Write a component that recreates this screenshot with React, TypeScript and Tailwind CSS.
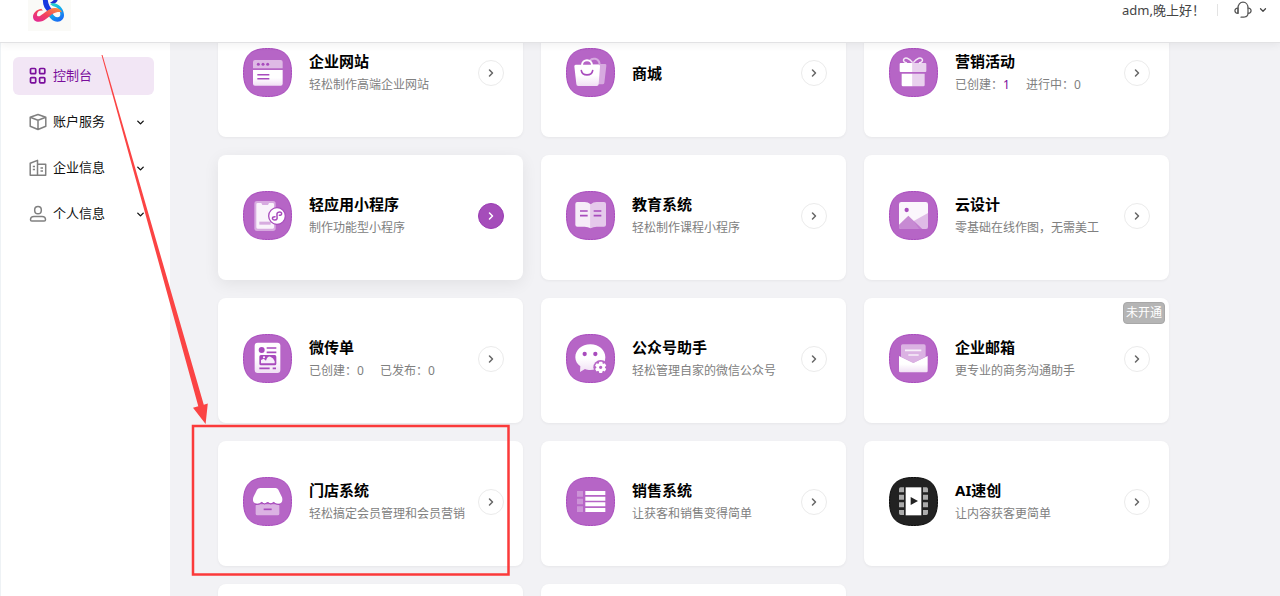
import type { ReactNode } from 'react';
import clsx from 'clsx';
import { ChevronDown, ChevronRight } from 'lucide-react';

type Stat = { label: string; value: number; active?: boolean };

type AppCard = {
  id: string;
  title: string;
  desc?: string;
  stats?: Stat[];
  icon: ReactNode;
  dark?: boolean;
  hovered?: boolean;
  badge?: string;
};

type MenuItem = { label: string; icon: ReactNode; active?: boolean };

const P = '#b665c6';

function AppIcon({ dark, children }: { dark?: boolean; children: ReactNode }) {
  return (
    <svg viewBox="0 0 147 147" className="size-[49px] shrink-0" aria-hidden="true">
      <path
        d="M73.500 1.500C124 1.500 145.500 23 145.500 73.500S124 145.500 73.500 145.500 1.500 124 1.500 73.500 23 1.500 73.500 1.500Z"
        fill={dark ? '#222222' : P}
        stroke={dark ? '#0c0c0c' : '#a84bbd'}
        strokeWidth="3"
      />
      {children}
    </svg>
  );
}

const siteIcon = (
  <>
    <path d="M30 61V42q0-6 6-6h77q6 0 6 6v19z" fill="#fff" opacity=".55" />
    <circle cx="46" cy="49" r="4.500" fill="#a84bbd" />
    <circle cx="60" cy="49" r="4.500" fill="#a84bbd" />
    <circle cx="74" cy="49" r="4.500" fill="#a84bbd" />
    <path d="M30 66h89v41q0 6-6 6H36q-6 0-6-6z" fill="url(#fade)" />
    <path d="M43 80h36M43 92h36" stroke="#a84bbd" strokeWidth="4.500" />
  </>
);

const mallIcon = (
  <>
    <path d="M76 48h42q4 0 3 5l-6 52q-1 4-5 4H80z" fill="#fff" opacity=".45" />
    <path d="M72 38c6-9 26-9 29 10" fill="none" stroke="#fff" strokeWidth="6" opacity=".45" />
    <path d="M29 50h69q5 0 4 5l-4 53q0 6-6 6H37q-6 0-6-6l-6-53q0-5 4-5z" fill="url(#fade)" />
    <path d="M48 52c0-20 30-20 30 0" fill="none" stroke="#fff" strokeWidth="6" />
    <path d="M46 68c3 17 31 17 34 0" fill="none" stroke="#a84bbd" strokeWidth="5" strokeLinecap="round" />
  </>
);

const giftIcon = (
  <>
    <path d="M71 45H35q-3 0-3 3v21q0 3 3 3h36zM71 77H38v34q0 4 4 4h29z" fill="#fff" />
    <path d="M71 45h38q3 0 3 3v21q0 3-3 3H71zM71 77h36v34q0 4-4 4H71z" fill="#fff" opacity=".7" />
    <path d="M71 44C60 29 48 27 44 34q-3 7 10 11M73 44c11-15 23-17 27-10q3 7-10 11" fill="none" stroke="#fff" strokeWidth="4.500" opacity=".85" />
  </>
);

const miniAppIcon = (
  <>
    <rect x="34" y="30" width="64" height="90" rx="8" fill="#fff" opacity=".45" />
    <path d="M40 40q0-4 4-4h11l3 6h17l3-6h11q4 0 4 4v69q0 4-4 4H44q-4 0-4-4z" fill="#fff" opacity=".85" />
    <rect x="49" y="92" width="34" height="9" fill={P} opacity=".5" />
    <circle cx="102" cy="75" r="25" fill="#fff" stroke="#a84bbd" strokeWidth="4" />
    <path d="M96 77c-10 0-10 10-1 10 10 0 7-8 7-12s-2-12 8-12c8 0 8 10-1 10" fill="none" stroke="#a84bbd" strokeWidth="4.500" strokeLinecap="round" />
  </>
);

const bookIcon = (
  <>
    <path d="M74 40Q66 33 56 33H34q-6 0-6 6v62q0 6 6 6h22q10 0 18 5z" fill="#fff" opacity=".88" />
    <path d="M74 40q8-7 18-7h22q6 0 6 6v62q0 6-6 6H92q-10 0-18 5z" fill="#fff" opacity=".65" />
    <path d="M42 60h23M42 74h23M83 60h23M83 74h23" stroke="#a84bbd" strokeWidth="5" />
  </>
);

const imageIcon = (
  <>
    <rect x="30" y="33" width="87" height="81" rx="7" fill="#fff" opacity=".94" />
    <circle cx="53" cy="57" r="6.500" fill="#a84bbd" />
    <path d="M74 90l43-24v42q0 6-6 6H90z" fill={P} opacity=".4" />
    <path d="M30 101l28-27 42 40H36q-6 0-6-6z" fill={P} opacity=".75" />
  </>
);

const flyerIcon = (
  <>
    <rect x="35" y="26" width="77" height="91" rx="9" fill="url(#fade)" />
    <circle cx="56" cy="48" r="9" fill="#a84bbd" />
    <path d="M71 42h29M71 55h29M49 103h31M89 103h10" stroke="#a84bbd" strokeWidth="5" />
    <rect x="49" y="63" width="51" height="31" rx="5" fill="#a84bbd" />
    <path d="M54 88V78l8-4 7 6q4-14 13-12 10 4 13 14v6z" fill="#f7effa" />
    <circle cx="63" cy="70" r="3" fill="#fff" />
  </>
);

const gearTeeth = [0, 60, 120, 180, 240, 300];

const wechatIcon = (
  <>
    <path d="M73 31c26 0 45 17 45 39s-19 38-45 38c-6 0-12-1-16-3l-15 9 1-17C34 91 28 82 28 70c0-22 19-39 45-39z" fill="url(#fade)" />
    <circle cx="56" cy="60" r="6.500" fill="#a84bbd" />
    <circle cx="88" cy="60" r="6.500" fill="#a84bbd" />
    <circle cx="104" cy="100" r="22" fill={P} />
    <circle cx="104" cy="100" r="9" fill="none" stroke="#fff" strokeWidth="8" />
    {gearTeeth.map((deg) => (
      <rect key={deg} x="99" y="83" width="10" height="8" rx="2" fill="#fff" transform={`rotate(${deg} 104 100)`} />
    ))}
  </>
);

const mailIcon = (
  <>
    <path d="M36 68V36q0-5 5-5h64q5 0 5 5v32L73 87z" fill="#fff" opacity=".5" />
    <path d="M48 49h49M58 63h31" stroke="#fff" strokeWidth="5" opacity=".8" />
    <path d="M30 66l43 21 43-21v45q0 4-4 4H34q-4 0-4-4z" fill="url(#fade)" />
  </>
);

const storeIcon = (
  <>
    <path d="M38 82h71v28q0 5-5 5H43q-5 0-5-5z" fill="#fff" opacity=".5" />
    <path d="M50 33h48q5 0 8 5l11 23q5 19-13 19-8 0-12-6-7 9-18 1-10 9-18-1-5 6-12 6-18 0-13-19l11-23q3-5 10-5z" fill="#fff" />
    <path d="M36 83q15 0 20-6 8 8 18 0 10 8 18 0 6 6 19 6" fill="none" stroke="#a84bbd" strokeWidth="3" />
    <path d="M62 97h24" stroke="#a84bbd" strokeWidth="5" />
  </>
);

const salesIcon = (
  <>
    <path d="M33 42h18v17H33zM33 65h18v17H33zM33 88h18v17H33z" fill="#fff" opacity=".3" />
    <path d="M58 42h60v12H58zM58 59h60v12H58zM58 76h60v12H58zM58 93h60v12H58z" fill="#fff" />
  </>
);

const videoIcon = (
  <>
    <rect x="50" y="31" width="47" height="84" fill="#fff" />
    <path d="M65 60v24l22-12z" fill="#222" />
    <path
      d="M30 36q0-5 5-5h10v15H30zM30 53h15v15H30zM30 76h15v15H30zM30 99h15v15H35q-5 0-5-5zM102 31h10q5 0 5 5v10h-15zM102 53h15v15h-15zM102 76h15v15h-15zM102 99h15v10q0 5-5 5h-10z"
      fill="#ababab"
    />
  </>
);

const cards: AppCard[] = [
  { id: 'site', title: '企业网站', desc: '轻松制作高端企业网站', icon: siteIcon },
  { id: 'mall', title: '商城', icon: mallIcon },
  {
    id: 'marketing',
    title: '营销活动',
    stats: [
      { label: '已创建', value: 1, active: true },
      { label: '进行中', value: 0 },
    ],
    icon: giftIcon,
  },
  { id: 'miniapp', title: '轻应用小程序', desc: '制作功能型小程序', icon: miniAppIcon, hovered: true },
  { id: 'edu', title: '教育系统', desc: '轻松制作课程小程序', icon: bookIcon },
  { id: 'design', title: '云设计', desc: '零基础在线作图，无需美工', icon: imageIcon },
  {
    id: 'flyer',
    title: '微传单',
    stats: [
      { label: '已创建', value: 0 },
      { label: '已发布', value: 0 },
    ],
    icon: flyerIcon,
  },
  { id: 'wechat', title: '公众号助手', desc: '轻松管理自家的微信公众号', icon: wechatIcon },
  { id: 'mail', title: '企业邮箱', desc: '更专业的商务沟通助手', icon: mailIcon, badge: '未开通' },
  { id: 'store', title: '门店系统', desc: '轻松搞定会员管理和会员营销', icon: storeIcon },
  { id: 'sales', title: '销售系统', desc: '让获客和销售变得简单', icon: salesIcon },
  { id: 'video', title: 'AI速创', desc: '让内容获客更简单', icon: videoIcon, dark: true },
];

const menu: MenuItem[] = [
  {
    label: '控制台',
    active: true,
    icon: (
      <g strokeWidth="1.700">
        <rect x="1.500" y="1.500" width="5.200" height="5.200" rx="1" />
        <rect x="10.600" y="1.500" width="5.200" height="5.200" rx="1" />
        <rect x="1.500" y="10.600" width="5.200" height="5.200" rx="1" />
        <rect x="10.600" y="10.600" width="5.200" height="5.200" rx="1" />
      </g>
    ),
  },
  {
    label: '账户服务',
    icon: <path d="M9 1.500l7.800 2.800v9L9 16.500l-7.800-3.200v-9zM1.200 4.300L9 7.200l7.800-2.900M9 7.200v9.300" />,
  },
  {
    label: '企业信息',
    icon: (
      <>
        <path d="M1.200 16.200V4.300L8.500 1.400v14.800zM8.500 5.300h8.200v10.900H1.200" />
        <path d="M3.800 7.500h2.200M3.800 10.500h2.200M11.500 9h2.500M11.500 12h2.500" />
      </>
    ),
  },
  {
    label: '个人信息',
    icon: (
      <>
        <rect x="5.700" y="1.500" width="6.600" height="7.200" rx="3.300" />
        <path d="M5 11.500h8c2 0 3.500 1.500 3.500 3.200 0 .8-.6 1.300-1.300 1.300H2.800c-.7 0-1.300-.5-1.300-1.300 0-1.700 1.500-3.200 3.500-3.200z" />
      </>
    ),
  },
];

function Logo() {
  return (
    <svg viewBox="0 0 129 93" className="h-[31px] w-[43px]" role="img" aria-label="logo">
      <defs>
        <linearGradient id="lg-warm" x1="0" y1="1" x2="1" y2="0">
          <stop offset="0" stopColor="#e0269b" />
          <stop offset=".45" stopColor="#f23f60" />
          <stop offset="1" stopColor="#ff9a3c" />
        </linearGradient>
        <linearGradient id="lg-cool" x1="0" y1="0" x2=".6" y2="1">
          <stop offset="0" stopColor="#35e0b8" />
          <stop offset=".5" stopColor="#12b4ea" />
          <stop offset="1" stopColor="#1a6cf2" />
        </linearGradient>
      </defs>
      <rect width="129" height="93" fill="#fafaf7" />
      <path d="M45-4h14c1 16 6 25 14 33l-10 9C50 28 43 14 45-4z" fill="#1637e0" />
      <path d="M80-4h10c-1 8-6 14-15 16l-9-4c6-2 11-6 14-12z" fill="#1e2ed2" />
      <path d="M66 12c4-3 12-3 18-1 14 5 24 19 24 34 0 12-8 20-19 20-15 0-26-12-31-26l12-4c5 10 11 17 19 17 5 0 8-3 8-9 0-12-10-23-23-25z" fill="url(#lg-cool)" />
      <path d="M40 26C24 29 15 40 15 50c0 9 7 15 17 15 18 0 29-16 43-24 8-4 16-6 27-4-4-9-12-14-22-13-19 1-32 17-43 23-5 3-10 2-10-3 0-8 6-13 18-12z" fill="url(#lg-warm)" />
    </svg>
  );
}

function Header() {
  return (
    <header className="relative z-10 flex h-[43px] shrink-0 items-start justify-between border-b border-[#e2e2e4] bg-white pl-7 pr-3 shadow-[0_2px_8px_rgba(0,0,0,0.06)]">
      <Logo />
      <div className="flex h-5 items-center text-[#444]">
        <span className="text-[13px] leading-5">adm,晚上好！</span>
        <span className="ml-3 mr-4 h-3 w-px bg-[#e3e3e3]" />
        <button type="button" aria-label="客服" className="flex items-center gap-1.5">
          <svg viewBox="0 0 18 18" className="size-[18px]" fill="none" stroke="#555" strokeWidth="1.200" strokeLinecap="round">
            <path d="M4 12V7C4 3.800 6 1.200 9 1.200s5 2.600 5 5.800v5" />
            <path d="M4 7C1.900 7.200.9 8.300.9 9.700S1.900 12.200 4 12.400zM14 7c2.100.2 3.100 1.300 3.100 2.700S16.100 12.200 14 12.400c0 1.700-1.500 3.200-3.500 3.600M7 16.200h3" />
          </svg>
          <ChevronDown size={10} strokeWidth={3} />
        </button>
      </div>
    </header>
  );
}

function Sidebar() {
  return (
    <nav className="flex w-[170px] shrink-0 flex-col gap-2 border-l border-[#eef2f5] bg-white pl-3 pr-4 pt-[14px]">
      {menu.map((item) => (
        <a
          key={item.label}
          href="#"
          className={clsx(
            'flex h-[38px] items-center rounded-md pl-4 pr-2 text-[13px]',
            item.active ? 'bg-[#f2e6f5] text-[#7a0e9c]' : 'text-[#111]',
          )}
        >
          <svg
            viewBox="0 0 18 18"
            className={clsx('mr-[6px] size-[18px]', item.active ? 'stroke-[#7a0e9c]' : 'stroke-[#808080]')}
            fill="none"
            strokeWidth="1.500"
            strokeLinejoin="round"
          >
            {item.icon}
          </svg>
          <span className="flex-1">{item.label}</span>
          {!item.active && <ChevronDown size={11} strokeWidth={3} />}
        </a>
      ))}
    </nav>
  );
}

function Card({ card }: { card: AppCard }) {
  return (
    <article
      className={clsx(
        'relative flex h-[125px] items-center rounded-lg bg-white pb-1 pl-[25px] pr-[19px]',
        card.hovered ? 'shadow-[0_4px_16px_rgba(0,0,0,0.07)]' : 'shadow-[0_1px_3px_rgba(0,0,0,0.05)]',
      )}
    >
      <AppIcon dark={card.dark}>{card.icon}</AppIcon>
      <div className="ml-[17px] flex-1 whitespace-nowrap">
        <h2 className="text-[15px] font-bold leading-6 text-black">{card.title}</h2>
        {card.desc && <p className="text-xs leading-6 text-[#808080]">{card.desc}</p>}
        {card.stats && (
          <p className="flex gap-4 text-xs leading-6 text-[#808080]">
            {card.stats.map((stat) => (
              <span key={stat.label}>
                {stat.label}：<span className={clsx(stat.active && 'text-[#7a0e9c]')}>{stat.value}</span>
              </span>
            ))}
          </p>
        )}
      </div>
      <button
        type="button"
        aria-label={card.title}
        className={clsx(
          'flex size-[26px] shrink-0 items-center justify-center rounded-full border',
          card.hovered ? 'border-[#9a3bb3] bg-[#a54dba] text-white' : 'border-[#ebebeb] bg-white text-[#666]',
        )}
      >
        <ChevronRight size={12} strokeWidth={3} />
      </button>
      {card.badge && (
        <span className="absolute right-1 top-1 rounded border border-[#a8a8a8] bg-[#b5b5b5] px-[2px] text-xs leading-5 text-white">
          {card.badge}
        </span>
      )}
    </article>
  );
}

// red box and arrow drawn over the page, pointing at the store card
function Annotation() {
  return (
    <svg className="pointer-events-none absolute left-0 top-0 z-20" width="520" height="590" aria-hidden="true">
      <path
        d="M101.500 55L102.500 55 203.800 404.800 207.800 403.600 205.600 424 193 407.800 198.300 406.200Z"
        fill="#fb4444"
      />
      <rect x="193" y="426" width="315.500" height="148.500" fill="none" stroke="#fb3a3a" strokeWidth="2.500" />
    </svg>
  );
}

export default function App() {
  return (
    <div className="relative flex h-screen flex-col overflow-hidden bg-[#f2f2f5] font-['Noto_Sans','Noto_Sans_CJK_SC',sans-serif]">
      <svg className="absolute size-0" aria-hidden="true">
        <defs>
          <linearGradient id="fade" x1="0" y1="0" x2="0" y2="1">
            <stop offset="0" stopColor="#fff" />
            <stop offset=".5" stopColor="#fff" />
            <stop offset="1" stopColor="#f0dff4" />
          </linearGradient>
        </defs>
      </svg>
      <Header />
      <div className="flex min-h-0 flex-1">
        <Sidebar />
        <main className="min-w-0 flex-1 overflow-hidden pl-12 pr-[111px]">
          <div className="-mt-[31px] grid grid-cols-3 gap-[18px]">
            {cards.map((card) => (
              <Card key={card.id} card={card} />
            ))}
            <div className="h-[125px] rounded-lg bg-white shadow-[0_1px_3px_rgba(0,0,0,0.05)]" />
            <div className="h-[125px] rounded-lg bg-white shadow-[0_1px_3px_rgba(0,0,0,0.05)]" />
          </div>
        </main>
      </div>
      <Annotation />
    </div>
  );
}
